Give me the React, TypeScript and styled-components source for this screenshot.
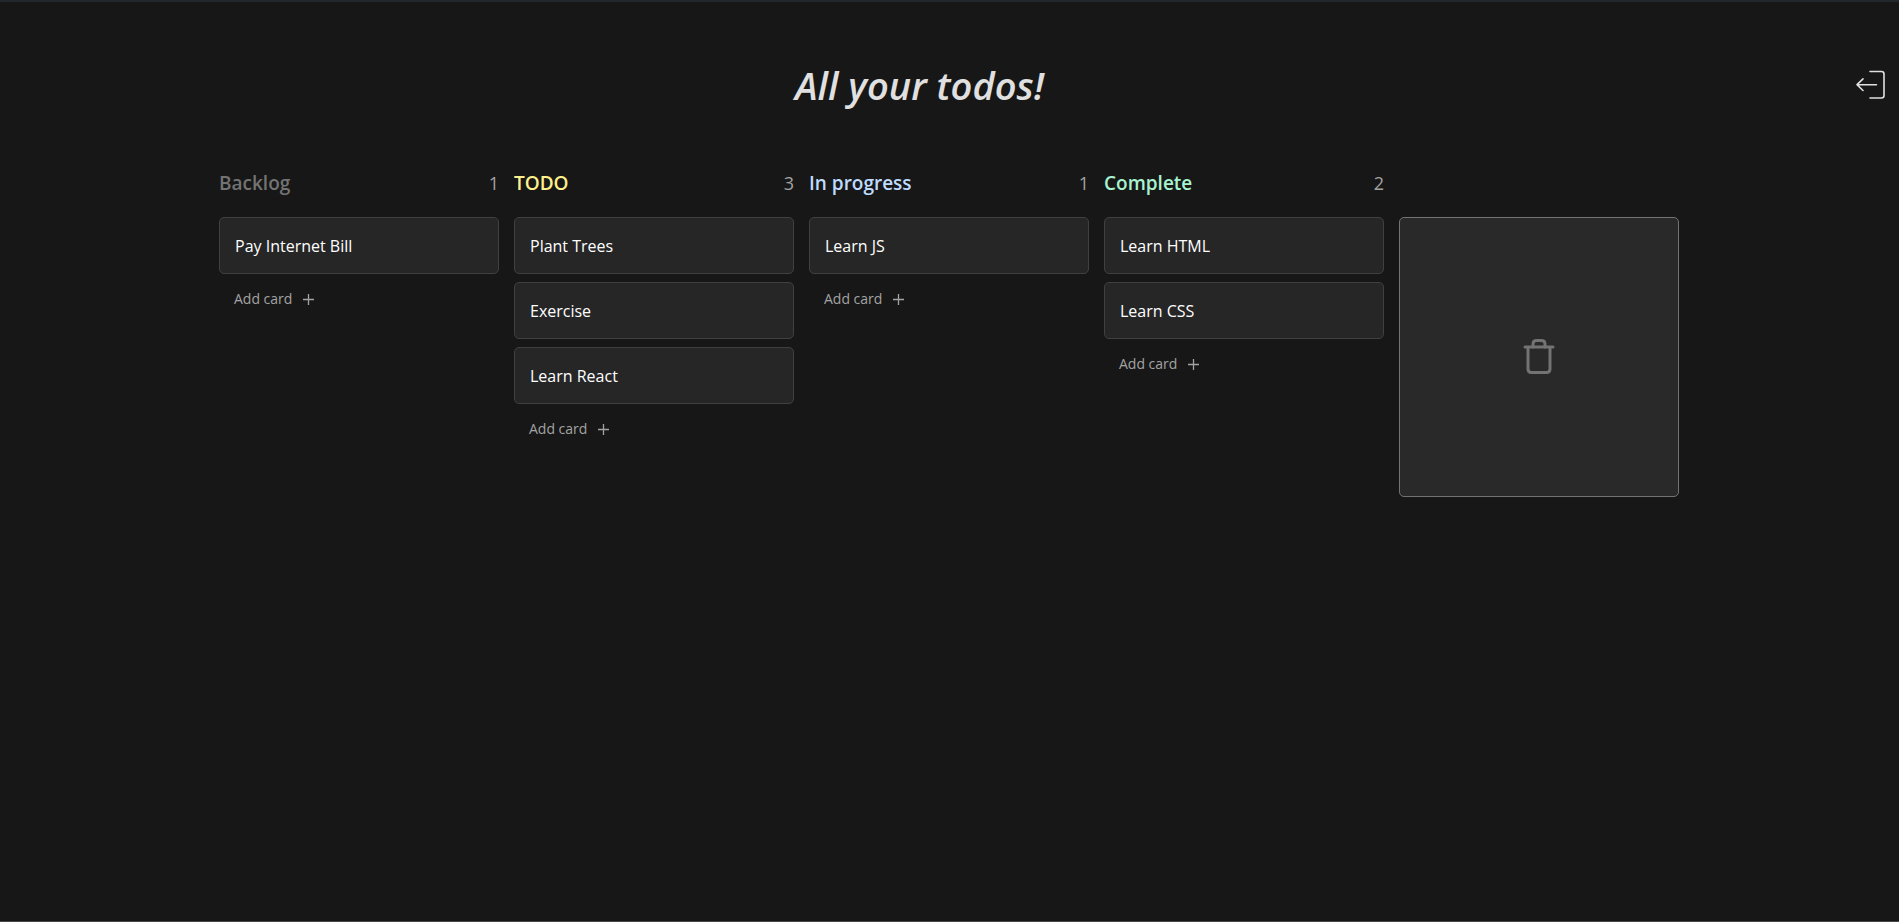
import React from "react";
import styled, { createGlobalStyle } from "styled-components";

const GlobalStyle = createGlobalStyle`
  *, *::before, *::after { box-sizing: border-box; }
  body {
    margin: 0;
    background: #171717;
    color: #f5f5f5;
    font-family: "Segoe UI", "Open Sans", "Noto Sans", sans-serif;
  }
`;

const Page = styled.div`
  display: flex;
  flex-direction: column;
  min-height: 100vh;
  border-top: 2px solid #22272b;
  border-bottom: 1px solid #4a4648;
`;

const Header = styled.header`
  display: flex;
  align-items: center;
  padding: 53px 0 0;
`;

const Title = styled.h1`
  flex: 1;
  margin: 0;
  text-align: center;
  font-size: 38px;
  line-height: 60px;
  font-weight: 600;
  font-style: italic;
  color: #e0e0e0;
`;

const LogoutButton = styled.button`
  display: flex;
  justify-content: flex-end;
  width: 60px;
  padding: 0 14px 0 0;
  border: 0;
  background: none;
  color: #e0e0e0;
  cursor: pointer;
`;

const Board = styled.main`
  display: flex;
  justify-content: center;
  align-items: flex-start;
  gap: 15px;
  padding: 54px 17px 0 16px;
`;

const ColumnBox = styled.section`
  flex: 0 1 280px;
  min-width: 0;
`;

const ColumnHeader = styled.div`
  display: flex;
  align-items: center;
  justify-content: space-between;
  height: 28px;
  margin-bottom: 20px;
`;

const ColumnTitle = styled.h2<{ $color: string }>`
  margin: 0;
  font-size: 19px;
  line-height: 28px;
  font-weight: 600;
  color: ${(p) => p.$color};
`;

const Count = styled.span`
  font-size: 18px;
  line-height: 28px;
  color: #a3a3a3;
`;

const CardList = styled.ul`
  display: flex;
  flex-direction: column;
  gap: 8px;
  margin: 0;
  padding: 0;
  list-style: none;
`;

const Card = styled.li`
  padding: 16px 15px 14px;
  border: 1px solid #404040;
  border-radius: 5px;
  background: #262626;
  color: #fff;
  font-size: 16px;
  line-height: 25px;
  cursor: grab;
`;

const AddButton = styled.button`
  display: flex;
  align-items: center;
  gap: 11px;
  margin: 8px 0 0;
  padding: 6px 15px;
  border: 0;
  background: none;
  color: #a3a3a3;
  font-family: inherit;
  font-size: 14px;
  line-height: 22px;
  cursor: pointer;
`;

const TrashZone = styled.aside`
  flex: 0 1 280px;
  display: grid;
  place-items: center;
  aspect-ratio: 1;
  margin-top: 48px;
  border: 1px solid #737373;
  border-radius: 5px;
  background: #292929;
  color: #737373;
`;

const LogoutIcon = () => (
  <svg width="30" height="30" viewBox="0 0 30 30" fill="none" stroke="currentColor" strokeWidth="1.6" strokeLinecap="round" strokeLinejoin="round" aria-hidden="true">
    <path d="M15 1.5h11.5a2.5 2.5 0 0 1 2.5 2.5v21.5a2.5 2.5 0 0 1-2.5 2.5H15" />
    <path d="M21.5 14.7H2M8 8.9l-6 5.8 6 5.8" />
  </svg>
);

const PlusIcon = () => (
  <svg width="11" height="11" viewBox="0 0 11 11" stroke="currentColor" strokeWidth="1.3" aria-hidden="true">
    <path d="M5.5 0v11M0 5.5h11" />
  </svg>
);

const TrashIcon = () => (
  <svg width="32" height="36" viewBox="0 1 32 36" fill="none" stroke="currentColor" strokeWidth="3" strokeLinecap="round" strokeLinejoin="round" aria-hidden="true">
    <path d="M2 9h28M5 9v22q0 3.500 3.500 3.500h15q3.500 0 3.500-3.500V9" />
    <path d="M10 9V6q0-3.500 3.500-3.500h5q3.500 0 3.500 3.500v3" />
  </svg>
);

type ColumnData = { title: string; color: string; cards: string[] };

const columns: ColumnData[] = [
  { title: "Backlog", color: "#737373", cards: ["Pay Internet Bill"] },
  { title: "TODO", color: "#fef08a", cards: ["Plant Trees", "Exercise", "Learn React"] },
  { title: "In progress", color: "#bfdbfe", cards: ["Learn JS"] },
  { title: "Complete", color: "#a7f3d0", cards: ["Learn HTML", "Learn CSS"] },
];

const Column = ({ title, color, cards }: ColumnData) => (
  <ColumnBox>
    <ColumnHeader>
      <ColumnTitle $color={color}>{title}</ColumnTitle>
      <Count>{cards.length}</Count>
    </ColumnHeader>
    <CardList>
      {cards.map((card) => (
        <Card key={card} draggable>{card}</Card>
      ))}
    </CardList>
    <AddButton type="button">
      <span>Add card</span>
      <PlusIcon />
    </AddButton>
  </ColumnBox>
);

export default function App() {
  return (
    <>
      <GlobalStyle />
      <Page>
        <Header>
          <Title>All your todos!</Title>
          <LogoutButton type="button" aria-label="Log out">
            <LogoutIcon />
          </LogoutButton>
        </Header>
        <Board>
          {columns.map((column) => (
            <Column key={column.title} {...column} />
          ))}
          <TrashZone aria-label="Delete card">
            <TrashIcon />
          </TrashZone>
        </Board>
      </Page>
    </>
  );
}
